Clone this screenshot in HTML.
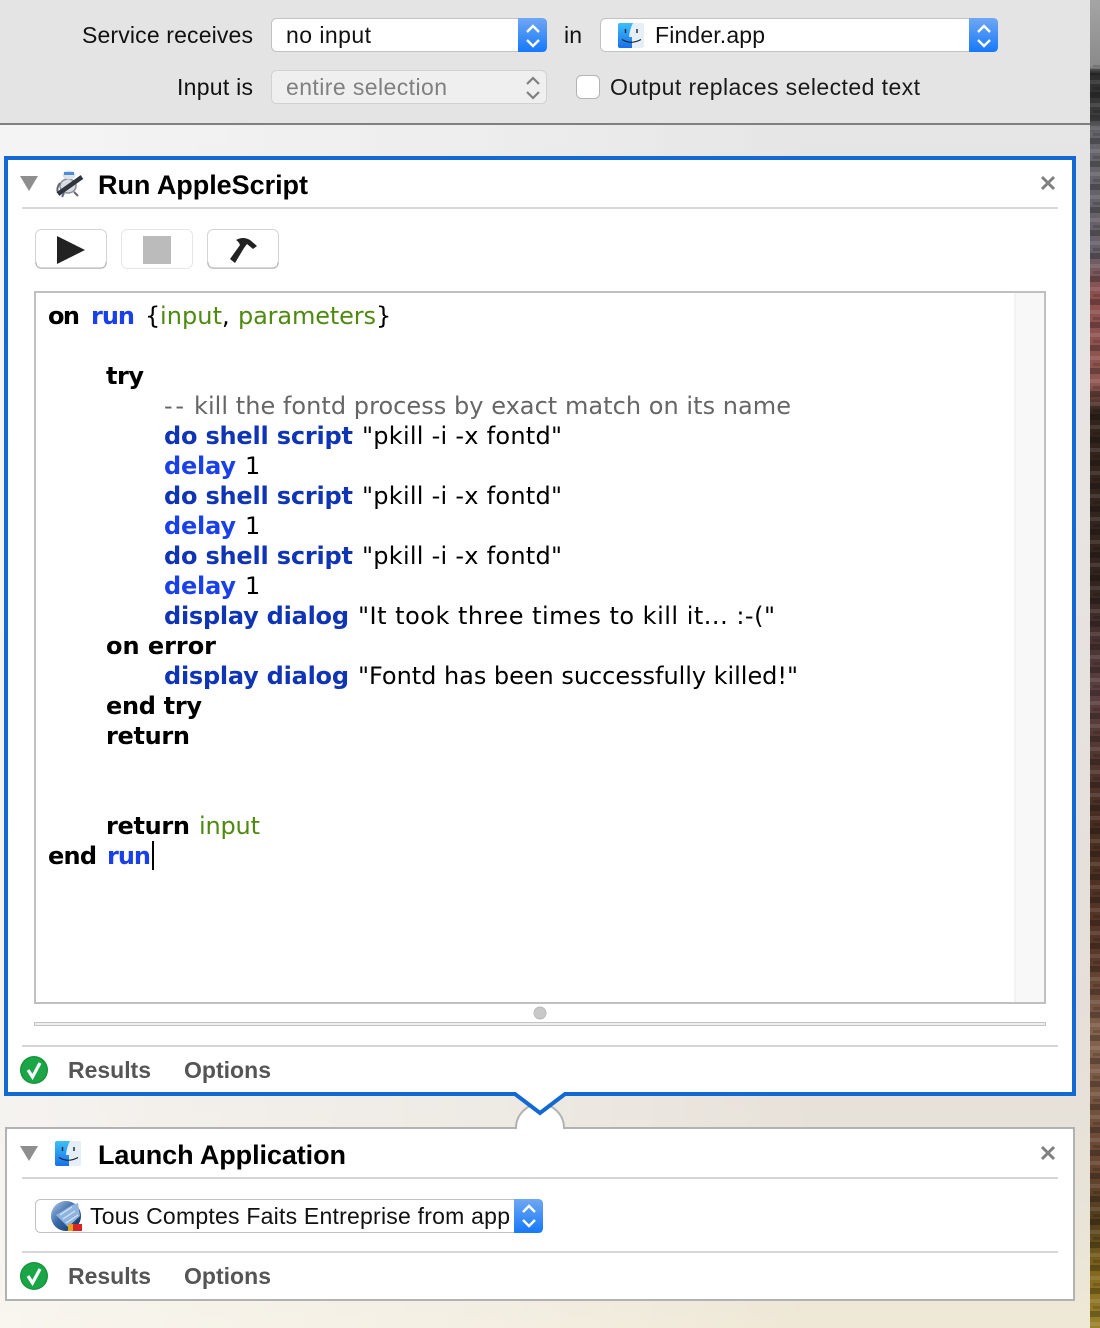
<!DOCTYPE html>
<html><head><meta charset="utf-8"><title>Run AppleScript</title>
<style>
html,body{margin:0;padding:0;background:#e8e4df}
body{width:1100px;height:1328px;overflow:hidden}
svg{display:block}
.ui{font-family:"Liberation Sans",sans-serif;font-size:23px;fill:#111}
.t{font-family:"Liberation Sans",sans-serif;font-size:27px;font-weight:bold;fill:#000}
.tab{font-family:"Liberation Sans",sans-serif;font-size:23px;font-weight:bold;fill:#555}
.c{font-family:"DejaVu Sans",sans-serif;font-size:24px;fill:#000}
.b{font-weight:bold}
.bl{font-weight:bold;fill:#1a40ea}
.nv{font-weight:bold;fill:#0f34b5}
.g{fill:#4f8a10}
.cm{fill:#666}
</style></head>
<body>
<svg width="1100" height="1328" viewBox="0 0 1100 1328" xmlns="http://www.w3.org/2000/svg">
<defs>
<linearGradient id="bgV" x1="0" y1="0" x2="0" y2="1">
<stop offset="0" stop-color="#e6e6e8"/><stop offset=".35" stop-color="#e7e4e2"/><stop offset=".75" stop-color="#e6dfd9"/><stop offset=".9" stop-color="#e8e3d9"/><stop offset="1" stop-color="#efe8d6"/>
</linearGradient>
<linearGradient id="bgH" x1="0" y1="0" x2="1" y2="0">
<stop offset="0" stop-color="#fff" stop-opacity=".6"/><stop offset=".45" stop-color="#fff" stop-opacity=".3"/><stop offset=".75" stop-color="#fff" stop-opacity="0"/>
</linearGradient>
<linearGradient id="wall" x1="0" y1="0" x2="0" y2="1">
<stop offset="0" stop-color="#a5a5a5"/><stop offset=".05" stop-color="#8a8a8a"/><stop offset=".056" stop-color="#2c2c2c"/><stop offset=".085" stop-color="#3a3a3a"/><stop offset=".1" stop-color="#66656b"/><stop offset=".19" stop-color="#66606a"/><stop offset=".22" stop-color="#8d5050"/><stop offset=".29" stop-color="#8e5650"/><stop offset=".31" stop-color="#32241c"/><stop offset=".44" stop-color="#34241e"/><stop offset=".52" stop-color="#5c4042"/><stop offset=".62" stop-color="#472d20"/><stop offset=".72" stop-color="#593828"/><stop offset=".78" stop-color="#84644f"/><stop offset=".88" stop-color="#654530"/><stop offset=".92" stop-color="#523d1d"/><stop offset=".96" stop-color="#84691d"/><stop offset="1" stop-color="#98822d"/>
</linearGradient>
<pattern id="stripes" width="10" height="23" patternUnits="userSpaceOnUse">
<rect width="10" height="6" fill="#000" opacity=".25"/><rect y="11" width="10" height="4" fill="#fff" opacity=".1"/><rect y="18" x="3" width="7" height="3" fill="#000" opacity=".15"/>
</pattern>
<linearGradient id="step" x1="0" y1="0" x2="0" y2="1">
<stop offset="0" stop-color="#6fa7f3"/><stop offset="1" stop-color="#1579fb"/>
</linearGradient>
<linearGradient id="fb" x1="0" y1="0" x2="0" y2="1">
<stop offset="0" stop-color="#3cc0fa"/><stop offset="1" stop-color="#1a6fe8"/>
</linearGradient>
<linearGradient id="globe" x1="0" y1="0" x2="1" y2="1">
<stop offset="0" stop-color="#b5cdec"/><stop offset=".45" stop-color="#3a6aa8"/><stop offset="1" stop-color="#0f2d5a"/>
</linearGradient>
<g id="chev"><path d="M-6 -4 L0 -10 L6 -4 M-6 4 L0 10 L6 4" fill="none" stroke="#fff" stroke-width="2.4"/></g>
<g id="finder">
<rect x="0" y="0" width="26" height="25" rx="2" fill="#e6eef6"/>
<path d="M2 0 H15 Q11.5 7 11 14 H14 L14 25 H2 Q0 25 0 23 V2 Q0 0 2 0Z" fill="url(#fb)"/>
<path d="M4 16.5 Q13 22 23 16.5" fill="none" stroke="#123" stroke-width="1.1"/>
<path d="M7.5 6 V10 M19 6 V10" stroke="#123" stroke-width="1.4"/>
</g>
<g id="ok">
<circle cx="0" cy="0" r="14" fill="#14953c"/>
<circle cx="0" cy="0" r="12.6" fill="#1aa547"/>
<path d="M-6 0 L-1.5 7 L6 -7" fill="none" stroke="#fff" stroke-width="3.2"/>
</g>
<g id="x"><path d="M-6 -6 L6 6 M6 -6 L-6 6" stroke="#808080" stroke-width="3"/></g>
</defs>

<!-- window background -->
<rect x="0" y="0" width="1090" height="1328" fill="url(#bgV)"/>
<rect x="0" y="125" width="1090" height="1203" fill="url(#bgH)"/>
<!-- wallpaper -->
<rect x="1090" y="0" width="10" height="1328" fill="url(#wall)"/>
<rect x="1090" y="65" width="10" height="1263" fill="url(#stripes)"/>

<!-- top bar -->
<rect x="0" y="0" width="1090" height="123" fill="#e4e4e4"/>
<rect x="0" y="123" width="1090" height="2" fill="#808080"/>

<text class="ui" x="82" y="43" textLength="171">Service receives</text>
<rect x="271.5" y="18.5" width="275" height="33" rx="5" fill="#fff" stroke="#c2c2c2"/>
<path d="M518 18 H542 Q547 18 547 23 V47 Q547 52 542 52 H518Z" fill="url(#step)"/>
<use href="#chev" x="533" y="36"/>
<text class="ui" x="286" y="43" textLength="85">no input</text>

<text class="ui" x="564" y="43" textLength="18">in</text>
<rect x="600.5" y="18.5" width="397" height="33" rx="5" fill="#fff" stroke="#c2c2c2"/>
<path d="M969 18 H993 Q998 18 998 23 V47 Q998 52 993 52 H969Z" fill="url(#step)"/>
<use href="#chev" x="984" y="36"/>
<use href="#finder" x="618" y="23"/>
<text class="ui" x="655" y="43" textLength="110">Finder.app</text>

<text class="ui" x="177" y="95" textLength="76">Input is</text>
<rect x="271.5" y="70.5" width="275" height="33" rx="5" fill="#efefef" stroke="#d2d2d2"/>
<text class="ui" x="286" y="95" textLength="161" style="fill:#808080">entire selection</text>
<path d="M527 84 L533 78 L539 84 M527 92 L533 98 L539 92" fill="none" stroke="#808080" stroke-width="2.2"/>

<rect x="576.5" y="75.5" width="23" height="23" rx="5" fill="#fff" stroke="#b4b4b4"/>
<text class="ui" x="610" y="95" textLength="310" style="fill:#1a1a1a">Output replaces selected text</text>

<!-- second action box -->
<path d="M6 1128 H516 A24 24 0 0 1 564 1128 H1074 V1300 H6 Z" fill="#fff" stroke="#b2b2b2" stroke-width="2"/>
<!-- first action box -->
<path d="M6 158 H1074 V1094 H565 L540 1113 L515 1094 H6 Z" fill="#fff" stroke="#1269d3" stroke-width="4"/>

<!-- run applescript header -->
<path d="M20 176 H38 L29 191Z" fill="#8e8e8e"/>
<g>
<ellipse cx="68" cy="186" rx="8" ry="7" fill="#d8dbdf" stroke="#8a9098" stroke-width="1.5"/>
<path d="M60 183 Q56 188 58 193 M64 193 L62 197 M74 192 L78 196" fill="none" stroke="#667" stroke-width="2"/>
<ellipse cx="69" cy="175" rx="6.5" ry="4.5" fill="#dfe2e6"/><rect x="64" y="172" width="10" height="3" fill="#4a90d8"/>
<path d="M58 194 L82 177" stroke="#2f3540" stroke-width="4.5"/>
</g>
<text class="t" x="98" y="194" textLength="210">Run AppleScript</text>
<use href="#x" x="1048" y="183"/>
<rect x="22" y="207" width="1036" height="2" fill="#d8d8d8"/>

<!-- toolbar -->
<rect x="35.5" y="229.5" width="71" height="39" rx="6" fill="#fff" stroke="#d4d4d4"/>
<path d="M36 262 Q36 268 42 268 H100 Q106 268 106 262" fill="none" stroke="#b4b4b4"/>
<path d="M57 236 L85 250 L57 264Z" fill="#222"/>
<rect x="121.5" y="229.5" width="71" height="39" rx="6" fill="#fff" stroke="#e6e6e6"/>
<rect x="143" y="236" width="28" height="28" fill="#bbb"/>
<rect x="207.5" y="229.5" width="71" height="39" rx="6" fill="#fff" stroke="#d4d4d4"/>
<path d="M208 262 Q208 268 214 268 H272 Q278 268 278 262" fill="none" stroke="#b4b4b4"/>
<path d="M230 259 L240 245 Q239 242 236 240 Q243 236 250 240 L257 246 L253 249 L247 244 L244 248 L235 263 Z" fill="#222"/>

<!-- editor -->
<rect x="35" y="292" width="1010" height="711" fill="#fff" stroke="#c0c0c0" stroke-width="2"/>
<rect x="1015" y="293" width="29" height="709" fill="#f8f8f8"/>
<rect x="1014.5" y="293" width="1" height="709" fill="#e8e8e8"/>

<text class="c b" x="48" y="324" textLength="32">on</text>
<text class="c bl" x="91" y="324" textLength="44">run</text>
<text class="c" x="145" y="324">{</text>
<text class="c g" x="160" y="324" textLength="62">input</text>
<text class="c" x="222" y="324">,</text>
<text class="c g" x="238" y="324" textLength="138">parameters</text>
<text class="c" x="376" y="324">}</text>

<text class="c b" x="106" y="384" textLength="38">try</text>
<text class="c cm" x="164" y="414" textLength="20">--</text>
<text class="c cm" x="194" y="414" textLength="597">kill the fontd process by exact match on its name</text>

<text class="c nv" x="164" y="444" textLength="189">do shell script</text>
<text class="c" x="362" y="444" textLength="200">"pkill -i -x fontd"</text>
<text class="c bl" x="164" y="474" textLength="72">delay</text>
<text class="c" x="245" y="474">1</text>
<text class="c nv" x="164" y="504" textLength="189">do shell script</text>
<text class="c" x="362" y="504" textLength="200">"pkill -i -x fontd"</text>
<text class="c bl" x="164" y="534" textLength="72">delay</text>
<text class="c" x="245" y="534">1</text>
<text class="c nv" x="164" y="564" textLength="189">do shell script</text>
<text class="c" x="362" y="564" textLength="200">"pkill -i -x fontd"</text>
<text class="c bl" x="164" y="594" textLength="72">delay</text>
<text class="c" x="245" y="594">1</text>
<text class="c nv" x="164" y="624" textLength="185">display dialog</text>
<text class="c" x="358" y="624" textLength="417">"It took three times to kill it... :-("</text>
<text class="c b" x="106" y="654" textLength="110">on error</text>
<text class="c nv" x="164" y="684" textLength="185">display dialog</text>
<text class="c" x="358" y="684" textLength="440">"Fontd has been successfully killed!"</text>
<text class="c b" x="106" y="714" textLength="96">end try</text>
<text class="c b" x="106" y="744" textLength="84">return</text>
<text class="c b" x="106" y="834" textLength="84">return</text>
<text class="c g" x="199" y="834" textLength="61">input</text>
<text class="c b" x="48" y="864" textLength="49">end</text>
<text class="c bl" x="107" y="864" textLength="44">run</text>
<rect x="152" y="841" width="2" height="29" fill="#000"/>

<!-- splitter -->
<rect x="34.5" y="1022.5" width="1011" height="3" fill="#eee" stroke="#c4c4c4"/>
<ellipse cx="540" cy="1013" rx="6" ry="6" fill="#c8c8c8" stroke="#bbb"/>

<!-- footer 1 -->
<rect x="22" y="1045" width="1036" height="2" fill="#d6d6d6"/>
<use href="#ok" x="34" y="1070"/>
<text class="tab" x="68" y="1078" textLength="83">Results</text>
<text class="tab" x="184" y="1078" textLength="87">Options</text>

<!-- launch application -->
<path d="M20 1146 H38 L29 1161Z" fill="#8e8e8e"/>
<use href="#finder" x="55" y="1141"/>
<text class="t" x="98" y="1164" textLength="248">Launch Application</text>
<use href="#x" x="1048" y="1153"/>
<rect x="22" y="1177" width="1036" height="2" fill="#d6d6d6"/>

<rect x="35.5" y="1199.5" width="507" height="33" rx="5" fill="#fff" stroke="#c2c2c2"/>
<path d="M514 1199 H538 Q543 1199 543 1204 V1228 Q543 1233 538 1233 H514Z" fill="url(#step)"/>
<use href="#chev" x="529" y="1216"/>
<circle cx="66" cy="1216" r="15" fill="url(#globe)"/>
<path d="M56 1215 L72 1205 L78 1203 L80 1216 L68 1227 Z" fill="#8fb4de"/>
<path d="M60 1215 L72 1207 M63 1219 L75 1211 M66 1223 L78 1215" stroke="#d6e4f4" stroke-width="1.2"/>
<rect x="68" y="1224" width="14" height="7" fill="#d92424"/>
<rect x="68" y="1224" width="5" height="7" fill="#e8a020"/>
<text class="ui" x="90" y="1224" textLength="420">Tous Comptes Faits Entreprise from app</text>

<rect x="22" y="1251" width="1036" height="2" fill="#d6d6d6"/>
<use href="#ok" x="34" y="1276"/>
<text class="tab" x="68" y="1284" textLength="83">Results</text>
<text class="tab" x="184" y="1284" textLength="87">Options</text>
</svg>
</body></html>
